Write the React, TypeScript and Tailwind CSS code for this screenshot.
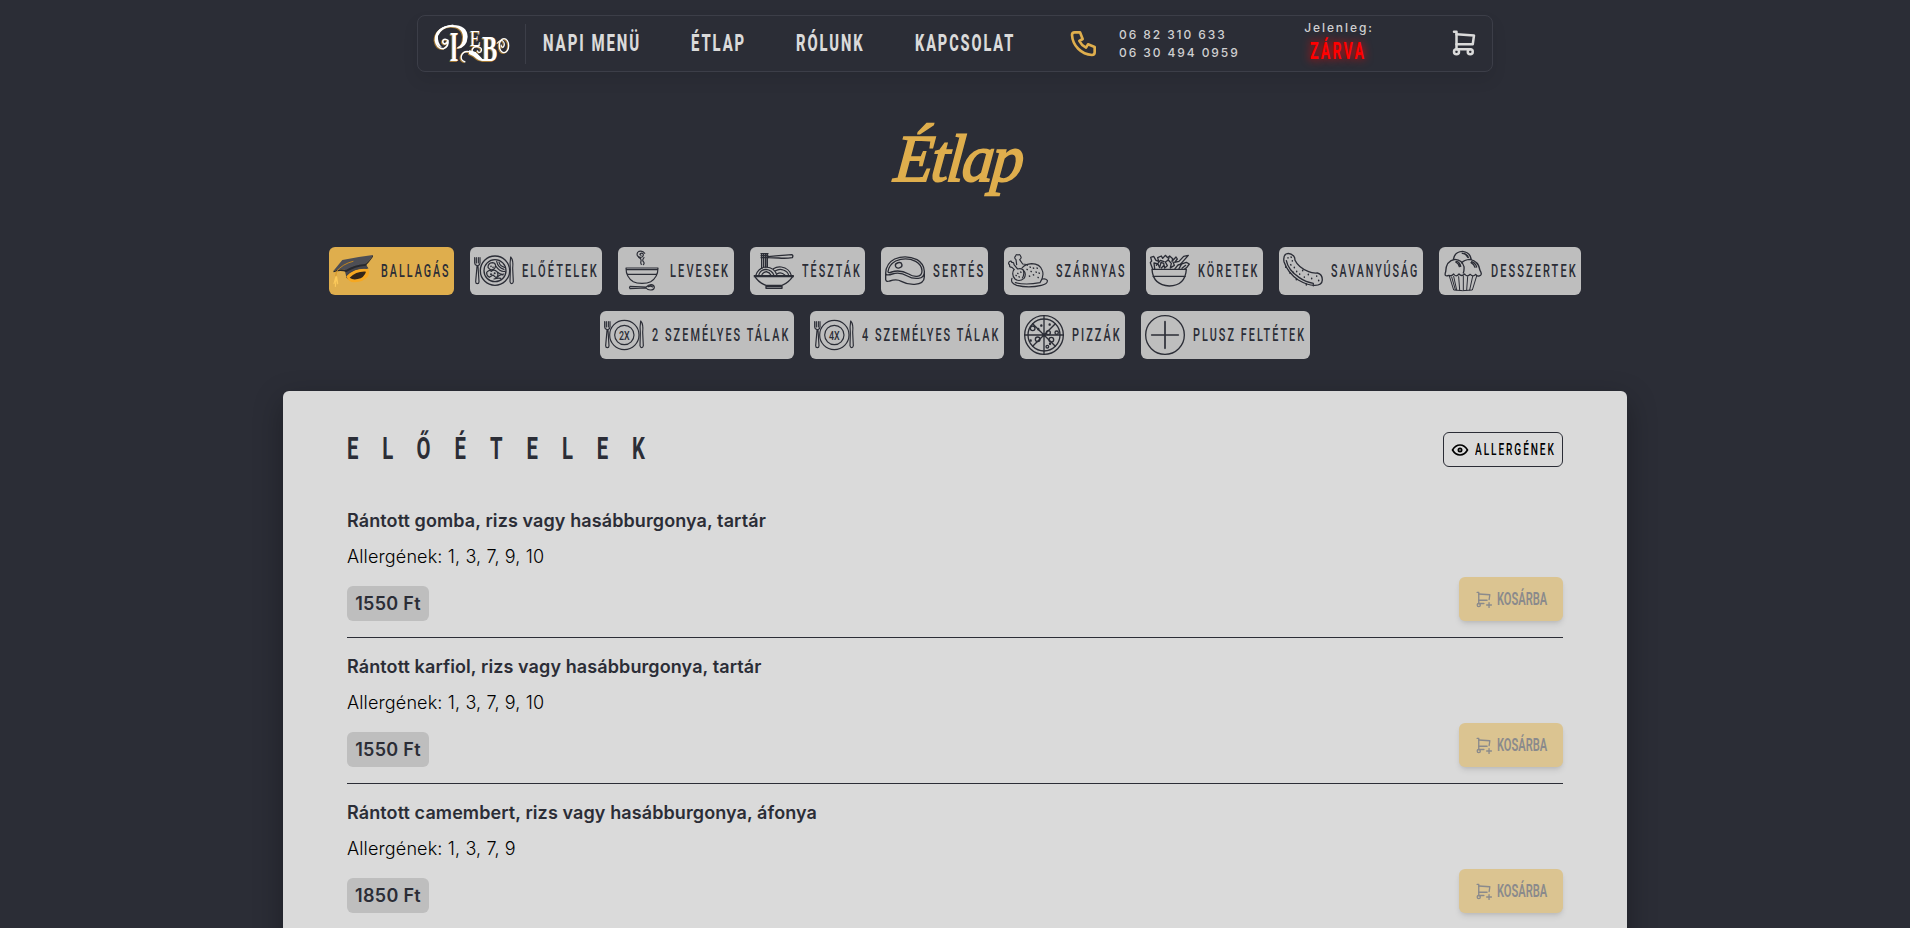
import { useLayoutEffect, useRef, type ReactNode } from "react";
import { TbEye, TbPhone, TbShoppingCart, TbShoppingCartPlus } from "react-icons/tb";
import clsx from "clsx";

/** Display lettering squeezed horizontally to an exact width. */
function Condensed({ text, width, className }: { text: string; width: number; className?: string }) {
  const box = useRef<HTMLSpanElement>(null);
  const inner = useRef<HTMLSpanElement>(null);
  useLayoutEffect(() => {
    const el = inner.current;
    if (!el || !box.current) return;
    const spacing = parseFloat(getComputedStyle(el).letterSpacing) || 0;
    box.current.style.width = `${width}px`;
    el.style.transform = `scaleX(${width / (el.offsetWidth - spacing)})`;
  }, [text, width]);
  return (
    <span ref={box} className={clsx("block shrink-0 font-[Roboto,sans-serif] whitespace-nowrap", className)}>
      <span ref={inner} className="inline-block origin-left">{text}</span>
    </span>
  );
}

function Icon({ children }: { children: ReactNode }) {
  return (
    <svg viewBox="0 0 120 120" className="size-10 shrink-0 overflow-visible" fill="none" stroke="#2b2d36" strokeWidth="4" strokeLinecap="round" strokeLinejoin="round">
      {children}
    </svg>
  );
}

const Cutlery = () => (
  <>
    <path d="M2 20v16q0 6 7 8v2L5 92q0 6 5 6t5-6l-3-46v-2q6-2 6-8V20M7 20v16M13 20v16" strokeWidth="3.5" />
    <path d="M110 18q-3 18-1 36l-1 38q1 6 5 6t5-6l-2-40q3-24-6-34z" strokeWidth="3.5" />
  </>
);

const Cap = () => (
  <Icon>
    <g stroke="none">
      <path d="M36 56L40 80Q46 90 68 84Q98 76 106 52L92 30Z" fill="#3d3d43" />
      <path d="M40 76Q64 50 104 52Q112 66 104 77Q90 92 66 94Q46 95 40 76Z" fill="#f6a821" />
      <path d="M50 80Q70 60 99 62Q94 80 74 84Q60 88 50 80Z" fill="#33261a" />
      <path d="M36 54L40 74Q62 50 104 54L98 36Z" fill="#46464c" />
      <path d="M1 60L28 27Q70 18 120 12Q112 27 97 39Q62 42 39 57Q22 51 1 60Z" fill="#4d4e55" />
      <path d="M1 60Q22 51 39 57Q62 42 97 39Q112 27 120 12V17Q108 34 98 44Q66 47 40 63Q22 56 2 64Z" fill="#27282d" />
    </g>
    <path d="M60 31Q28 39 10 62L8 80" stroke="#d78f16" strokeWidth="2.5" />
    <path d="M9 76L3 98M10 78L7 106M11 78L14 98" stroke="#fbc95a" strokeWidth="3.5" />
  </Icon>
);

const Starter = () => (
  <Icon>
    <Cutlery />
    <circle cx="63" cy="59" r="44" />
    <circle cx="63" cy="59" r="33" />
    <path d="M42 49q0-13 13-14 8 0 10 8 0 9-9 13-8 2-14-7zM38 64q7-9 14-3 8-8 17 1 7 11-3 18l-9-8-11 7q-9-5-8-15zM68 31q4 19 22 24M75 33q2 12 17 16M66 46q13 18 27 15M72 64q8 8 17 5M70 78q10-9 17-6M60 84q12-4 20-2" strokeWidth="3.5" />
    <g fill="#2b2d36" stroke="none"><circle cx="51" cy="46" r="2.5" /><circle cx="57" cy="49" r="2.5" /><circle cx="51" cy="70" r="3" /><circle cx="62" cy="67" r="3" /></g>
  </Icon>
);

const Soup = () => (
  <Icon>
    <path d="M12 51H108Q108 79 86 92Q77 97 60 97T34 92Q12 79 12 51ZM15 56H105M17 70H103" strokeWidth="3.5" />
    <path d="M57 13q-5-2-2-5 4-3 8 0 3 6-3 10-9 3-14-4-3-9 5-13 12-3 17 6M50 19q9 3 7 12-2 4 1 9M66 20q-7 8-1 13 3 4-1 8" strokeWidth="3.5" />
    <path d="M24 106l49 2q6-7 14-7 10 1 10 8-1 8-12 8-8 0-13-6l-48 2q-3-4 0-7zM79 107q7-4 13 1" strokeWidth="3.5" />
  </Icon>
);

const Pasta = () => (
  <Icon>
    <path d="M1 74H118Q104 96 84 103H36Q14 96 1 74ZM36 103v9h48v-9M36 107h48" />
    <path d="M23 8V52M29 8V49M35 8V48M40 8V48M21 8H42M21 14H42M21 20H42" />
    <path d="M42 17L74 14Q96 12 113 11q6 2 2 9-20 3-41 1L42 20" />
    <path d="M6 72Q13 50 36 48Q62 50 69 73M14 73Q19 56 36 55Q54 57 60 73M23 73Q27 63 37 62Q47 64 51 73M58 53Q69 46 82 48Q106 52 112 73M63 60Q76 52 88 57Q102 62 104 73M70 68Q81 61 94 73" strokeWidth="3.5" />
    <path d="M1 77H118" />
  </Icon>
);

const Steak = () => (
  <Icon>
    <path d="M2 67Q3 37 29 24Q63 10 96 26Q117 38 118 61Q119 80 100 82Q82 84 67 75Q45 62 22 69Q4 75 2 67V86Q4 94 14 90Q35 83 49 91Q67 101 89 100Q119 98 118 76V60" />
    <path d="M9 62Q12 41 32 30Q63 17 92 31Q110 41 111 59Q111 75 96 76Q83 77 71 69Q45 55 20 63Q9 67 9 62Z" />
    <ellipse cx="41" cy="43" rx="10" ry="8" transform="rotate(-15 41 43)" />
  </Icon>
);

const Poultry = () => (
  <Icon>
    <path d="M12 82Q6 96 26 103Q62 112 100 103Q120 98 118 88Q113 82 104 84" strokeWidth="3.5" />
    <path d="M22 95Q53 103 96 95Q109 75 103 59Q96 38 71 38Q51 39 42 51" strokeWidth="3.5" />
    <path d="M18 55Q9 71 21 84Q34 94 48 82Q57 68 45 56Q38 51 29 54L18 41Q18 33 11 34Q10 28 4 32Q-1 37 5 42Q3 49 12 49L19 56" strokeWidth="3.5" />
    <path d="M26 41L24 26Q17 20 23 15Q24 9 30 12Q36 9 38 16Q42 20 35 26L44 39Q58 39 58 43M46 58Q50 71 43 81" strokeWidth="3.5" />
    <path d="M57 55l1 1M66 48l1 1M76 51l1 1M87 51l1 1M69 61l1 1M84 63l1 1M93 66l1 1M76 71l1 1M90 79l1 1M64 75l1 1M29 67l1 1M38 63l1 1M33 77l1 1M24 73l1 1" strokeWidth="4" />
  </Icon>
);

const Side = () => (
  <Icon>
    <path d="M6 55H109Q106 104 58 105Q9 102 6 55ZM9 76H106" />
    <path d="M8 54L1 35L5 30L2 19L11 16L18 28L26 31L23 20L34 15L38 22L46 13L53 20L59 15L68 23L66 31L78 18L82 24L74 34L87 31L101 16L115 13L101 29L91 40L109 34L118 39L110 50L104 54" />
    <path d="M14 53L12 36L24 39L29 50L33 34L41 37L44 51L52 44L46 33L55 27L64 37L61 51L73 43L69 33M75 53L84 42L95 39L87 53M19 43L31 28L42 32M57 20L53 29M34 51L42 43M96 52L107 43" />
  </Icon>
);

const Pickle = () => (
  <Icon>
    <path d="M3 32Q0 15 9 9Q21 4 32 15Q36 19 36 28Q47 51 77 62Q87 67 103 66Q118 69 118 87Q117 103 96 103Q75 104 46 87Q14 65 3 32Z" />
    <path d="M10 29Q15 57 49 80Q69 94 91 97" />
    <path d="M24 18l1 1M15 20v1M28 29v1M23 41l1 1M34 49v1M41 61v1M31 64v1M50 69v1M59 58v1M64 78v1M76 70v1M86 82v1M101 75v1M107 88v1M91 101v3M70 99v3M40 83v3M21 65v2M8 47v2" strokeWidth="4.5" />
  </Icon>
);

const Dessert = () => (
  <Icon>
    <path d="M31 25Q35 2 59 1Q82 4 85 26M8 62Q9 29 36 25Q58 27 63 47Q64 56 61 66M56 36Q63 26 81 25Q107 30 111 58Q120 73 108 75Q101 77 98 70Q90 79 82 70Q72 80 65 69Q56 78 48 69Q39 80 32 69Q24 77 18 73Q2 79 8 62" />
    <path d="M19 75L32 117Q58 121 88 117L101 75M32 76L41 117M47 77L50 117M61 76V117M74 77L71 117M89 76L80 117M26 78L37 116" strokeWidth="3" />
    <path d="M58 7q11 1 16 12M64 7q10 4 12 13M41 31q10 3 12 15M38 33q9 4 11 14M86 32q11 3 15 16M84 35q9 4 12 14" />
  </Icon>
);

const Platter = ({ label }: { label: string }) => (
  <Icon>
    <Cutlery />
    <circle cx="61" cy="60" r="44" strokeWidth="3.5" />
    <circle cx="61" cy="60" r="29" strokeWidth="3.5" />
    <text x="61" y="75" textAnchor="middle" textLength="32" lengthAdjust="spacingAndGlyphs" fill="#2b2d36" stroke="none" fontSize="40" fontFamily="Roboto, sans-serif" fontWeight="500">{label}</text>
  </Icon>
);

const Pizza = () => (
  <Icon>
    <circle cx="60" cy="60" r="58" />
    <circle cx="60" cy="60" r="48" />
    <path d="M60 2V118M2 60H118M26 26L94 94M94 26L26 94" />
    <circle cx="26" cy="40" r="7" /><circle cx="41" cy="73" r="7" /><circle cx="82" cy="74" r="7" /><circle cx="73" cy="53" r="6" /><circle cx="70" cy="95" r="4" /><circle cx="98" cy="53" r="5" />
    <path d="M52 31v1M77 28v1M20 76v1M43 42v1M78 86v1" strokeWidth="7" />
  </Icon>
);

const Plus = () => (
  <Icon>
    <circle cx="60" cy="60" r="58" />
    <path d="M60 20V100M20 60H100" strokeWidth="5" />
  </Icon>
);

type Category = { label: string; icon: ReactNode; button: string; text: number; active?: boolean };

const rows: Category[][] = [
  [
    { label: "BALLAGÁS", icon: <Cap />, button: "w-[125px]", text: 67.5, active: true },
    { label: "ELŐÉTELEK", icon: <Starter />, button: "w-[132px]", text: 74.5 },
    { label: "LEVESEK", icon: <Soup />, button: "w-[116px]", text: 58 },
    { label: "TÉSZTÁK", icon: <Pasta />, button: "w-[115px]", text: 57.5 },
    { label: "SERTÉS", icon: <Steak />, button: "w-[107px]", text: 50 },
    { label: "SZÁRNYAS", icon: <Poultry />, button: "w-[126px]", text: 68.5 },
    { label: "KÖRETEK", icon: <Side />, button: "w-[117px]", text: 59.5 },
    { label: "SAVANYÚSÁG", icon: <Pickle />, button: "w-[144px]", text: 86.5 },
    { label: "DESSZERTEK", icon: <Dessert />, button: "w-[142px]", text: 84.5 },
  ],
  [
    { label: "2 SZEMÉLYES TÁLAK", icon: <Platter label="2X" />, button: "w-[194px]", text: 136.5 },
    { label: "4 SZEMÉLYES TÁLAK", icon: <Platter label="4X" />, button: "w-[194px]", text: 136.5 },
    { label: "PIZZÁK", icon: <Pizza />, button: "w-[105px]", text: 47.5 },
    { label: "PLUSZ FELTÉTEK", icon: <Plus />, button: "w-[169px]", text: 111 },
  ],
];

const dishes = [
  { name: "Rántott gomba, rizs vagy hasábburgonya, tartár", allergens: "1, 3, 7, 9, 10", price: "1550 Ft" },
  { name: "Rántott karfiol, rizs vagy hasábburgonya, tartár", allergens: "1, 3, 7, 9, 10", price: "1550 Ft" },
  { name: "Rántott camembert, rizs vagy hasábburgonya, áfonya", allergens: "1, 3, 7, 9", price: "1850 Ft" },
];

function Logo() {
  return (
    <svg viewBox="0 0 228 120" className="ml-4 h-10 w-[76px] shrink-0 overflow-visible" fontFamily="Liberation Serif, serif">
      {[{ dx: -3, dy: 2, c: "#a47a35" }, { dx: 0, dy: 0, c: "#ffffff" }].map((l) => (
        <g key={l.c} transform={`translate(${l.dx} ${l.dy})`} fill={l.c} stroke={l.c}>
          <path d="M43 50Q33 42 27 49Q24 57 32 60Q40 59 42 48Q45 67 29 74Q8 74 4 49Q4 10 58 4" fill="none" strokeWidth="4.5" />
          <path d="M50 3Q99 0 101 38Q99 71 70 74V70Q87 63 87 38Q85 9 50 9Q24 10 12 36Q10 56 24 70Q4 66 3 43Q8 9 50 3Z" stroke="none" />
          <text x="47" y="112" fontSize="126" textLength="26" lengthAdjust="spacingAndGlyphs" stroke="none" fontWeight="700">I</text>
          <text x="107" y="67" fontSize="68" textLength="33" lengthAdjust="spacingAndGlyphs" stroke="none">E</text>
          <text x="144" y="111" fontSize="106" textLength="46" lengthAdjust="spacingAndGlyphs" stroke="none" fontWeight="700">B</text>
          <path d="M94 114Q79 109 82 96Q87 80 105 83Q119 86 132 100Q144 113 156 107M126 86Q112 88 115 76Q121 64 135 69Q147 74 140 84Q132 88 130 79" fill="none" strokeWidth="4" />
          <path d="M105 79Q123 80 137 96Q144 106 152 107Q141 114 129 105Q119 95 105 90Z" stroke="none" />
          <ellipse cx="210" cy="65" rx="14" ry="21" fill="none" strokeWidth="4" />
          <path d="M190 58Q201 43 209 54Q214 63 207 70Q200 69 202 62" fill="none" strokeWidth="3.5" />
        </g>
      ))}
    </svg>
  );
}

const navText = "text-[24px] leading-[28px] font-extrabold tracking-[0.13em] text-[#dadada]";

export default function App() {
  return (
    <div className="flex h-[928px] flex-col items-center overflow-hidden bg-[#2b2d36] font-[Inter,sans-serif]">
      <header className="mt-[15px] flex h-[57px] w-[1076px] shrink-0 items-center rounded-lg border border-[#3c3e48] shadow-[0_8px_16px_rgba(0,0,0,0.08)]">
        <Logo />
        <div className="ml-[15px] h-10 w-px bg-[#3c3e48]" />
        <nav className="ml-[17px] flex gap-[52px] pb-px">
          <Condensed text="NAPI MENÜ" width={96} className={navText} />
          <Condensed text="ÉTLAP" width={53} className={navText} />
          <Condensed text="RÓLUNK" width={67} className={navText} />
          <Condensed text="KAPCSOLAT" width={98} className={navText} />
        </nav>
        <TbPhone className="mb-px ml-[55px] size-8 shrink-0 text-[#dfae4d]" />
        <div className="ml-[19px] w-[122px] text-[12px] leading-[18px] font-medium tracking-[0.16em] whitespace-nowrap text-[#d0d0d1]">
          <div>06 82 310 633</div>
          <div>06 30 494 0959</div>
        </div>
        <div className="ml-[63px] flex w-[70px] flex-col items-center pb-[3px]">
          <span className="text-[12px] leading-[18px] font-medium tracking-[0.16em] whitespace-nowrap text-[#d0d0d1]">Jelenleg:</span>
          <Condensed text="ZÁRVA" width={54} className="-ml-[5px] text-[24px] leading-[28px] font-bold tracking-[0.15em] text-[#ff0000] [text-shadow:0_0_12px_#ff0000]" />
        </div>
        <TbShoppingCart className="mb-px ml-[75px] size-[30px] shrink-0 text-[#dadada]" />
      </header>

      <h1 className="mt-[42px] flex h-[88px] shrink-0 items-center font-['Liberation_Serif',serif] text-[67px] leading-none font-normal text-[#dfae4d] italic">
        <span className="ml-[7px] inline-block scale-x-[.95] -skew-x-6 tracking-[-0.035em] [-webkit-text-stroke:1.8px_#dfae4d]">Étlap</span>
      </h1>

      <div className="mt-[45px] flex shrink-0 flex-col items-center gap-4">
        {rows.map((row, i) => (
          <div key={i} className="flex gap-4">
            {row.map((c) => (
              <button key={c.label} className={clsx("flex h-12 items-center rounded-md p-1", c.button, c.active ? "bg-[#dfae4d]" : "bg-[#bebebe]")}>
                {c.icon}
                <Condensed text={c.label} width={c.text} className="mb-px ml-2 text-left text-[18px] leading-6 font-medium tracking-[0.19em] text-[#2b2d36]" />
              </button>
            ))}
          </div>
        ))}
      </div>

      <main className="mt-8 h-[700px] w-[1344px] shrink-0 rounded-md bg-[#dadada] px-16 shadow-[0_10px_30px_rgba(0,0,0,0.3)]">
        <div className="flex items-start justify-between pt-[37px]">
          <Condensed text="ELŐÉTELEK" width={298} className="text-[32px] leading-10 font-bold tracking-[1.18em] text-[#2b2d36]" />
          <button className="mt-1 flex h-[35px] w-[120px] items-center rounded-md border border-[#2b2d36] pl-[6px] text-black">
            <TbEye className="size-5 shrink-0" />
            <Condensed text="ALLERGÉNEK" width={79} className="ml-[5px] text-left text-[16px] leading-5 font-medium tracking-[0.19em]" />
          </button>
        </div>
        <ul className="mt-[24px]">
          {dishes.map((d) => (
            <li key={d.name} className="flex h-[146px] items-end justify-between border-b border-[#2b2d36] pb-4">
              <div className="text-[18px] leading-7">
                <h3 className="font-semibold tracking-[0.1px] text-[#2b2d36]">{d.name}</h3>
                <p className="mt-2 font-light tracking-[0.14px] text-black">Allergének: {d.allergens}</p>
                <span className="mt-[15px] flex h-[35px] w-[82px] items-center justify-center rounded-md bg-[#bebebe] font-semibold tracking-[0.3px] text-[#2b2d36]">{d.price}</span>
              </div>
              <button className="flex h-11 w-[104px] items-center rounded-md bg-[#dbc491] pl-[15px] text-[#8a8a8c] shadow-md">
                <TbShoppingCartPlus className="size-[19px] shrink-0 [stroke-width:1.7]" />
                <Condensed text="KOSÁRBA" width={50} className="ml-1 text-left text-[18px] leading-6 font-semibold" />
              </button>
            </li>
          ))}
        </ul>
      </main>
    </div>
  );
}
